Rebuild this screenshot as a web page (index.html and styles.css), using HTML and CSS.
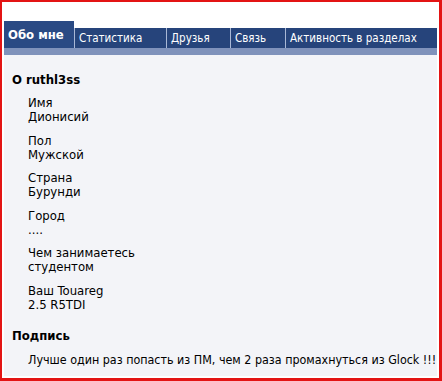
FILE: index.html
```html
<!DOCTYPE html>
<html lang="ru">
<head>
    <meta charset="UTF-8">
    <title>Профиль ruthl3ss</title>
    <link rel="stylesheet" href="styles.css">
</head>
<body>
    <div class="frame">
        <ul class="tabs">
            <li class="tab active">Обо мне</li>
            <li class="tab tab-stats">Статистика</li>
            <li class="tab tab-friends">Друзья</li>
            <li class="tab tab-contact">Связь</li>
            <li class="tab">Активность в разделах</li>
        </ul>

        <div class="panel">
            <h3>О ruthl3ss</h3>
            <dl class="fields">
                <div class="field"><dt>Имя</dt><dd>Дионисий</dd></div>
                <div class="field"><dt>Пол</dt><dd>Мужской</dd></div>
                <div class="field"><dt>Страна</dt><dd>Бурунди</dd></div>
                <div class="field"><dt>Город</dt><dd>....</dd></div>
                <div class="field"><dt>Чем занимаетесь</dt><dd>студентом</dd></div>
                <div class="field"><dt>Ваш Touareg</dt><dd>2.5 R5TDI</dd></div>
            </dl>

            <h3>Подпись</h3>
            <div class="signature">Лучше один раз попасть из ПМ, чем 2 раза промахнуться из Glock !!!</div>
        </div>
    </div>
</body>
</html>
```

FILE: styles.css
```css
* {
    margin: 0;
    padding: 0;
    box-sizing: border-box;
}

body {
    background-color: #ffffff;
    font-family: 'DejaVu Sans Condensed', 'DejaVu Sans', sans-serif;
    font-stretch: condensed;
    font-size: 13px;
    color: #000;
}

.frame {
    width: 442px;
    height: 381px;
    border: 2px solid #e31414;
    border-right-width: 3px;
    border-bottom-width: 3px;
    padding: 19px 2px 2px 2px;
    background-color: #fff;
    display: flex;
    flex-direction: column;
}

.tabs {
    list-style: none;
    display: flex;
    align-items: flex-end;
    background: linear-gradient(to bottom, transparent 7px, #26447b 7px);
    border-bottom: 7px solid #7f92bb;
}

.tab {
    color: #fff;
    font-size: 11.5px;
    height: 20px;
    line-height: 21px;
    padding: 0 4px;
    border-left: 1px solid #a9b8d6;
}

.tab-stats {
    width: 92px;
}

.tab-friends {
    width: 64px;
}

.tab-contact {
    width: 55px;
}

.tab.active {
    height: 27px;
    line-height: 28px;
    padding: 0 4px;
    border-left: none;
    font-weight: bold;
    font-size: 13px;
    width: 70px;
    background-color: #2a4a84;
}

.panel {
    flex: 1;
    background-color: #f3f4f8;
    padding: 17px 0 0 8px;
}

.panel h3 {
    font-size: 13px;
    font-weight: bold;
    line-height: 16px;
    margin-bottom: 8px;
}

.fields {
    padding-left: 16px;
    margin-bottom: 16px;
}

.field {
    margin-bottom: 9.5px;
    line-height: 14px;
}

.field dd {
    margin: 0;
}

.signature {
    padding-left: 16px;
    font-size: 12.4px;
    line-height: 15px;
    white-space: nowrap;
}
```
